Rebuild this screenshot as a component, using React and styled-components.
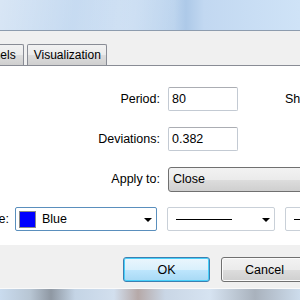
import React from 'react';
import styled, { createGlobalStyle } from 'styled-components';

const GlobalStyle = createGlobalStyle`
  html, body {
    margin: 0;
    padding: 0;
    overflow: hidden;
    background: #f0f0f0;
  }
  body {
    font-family: "Liberation Sans", Arial, sans-serif;
    font-size: 12px;
    color: #000;
  }
`;

const App = () => {
  return (
    <Window>
      <GlobalStyle />
      <Glass />
      <Client>
        <TabStrip>
          <Tab $first>Channels</Tab>
          <Tab>Visualization</Tab>
        </TabStrip>
        <Panel>
          <Row>
            <Label>Period:</Label>
            <TextBox>80</TextBox>
            <SideLabel>Shift:</SideLabel>
          </Row>
          <Row>
            <Label>Deviations:</Label>
            <TextBox>0.382</TextBox>
          </Row>
          <Row>
            <Label>Apply to:</Label>
            <ButtonCombo>Close</ButtonCombo>
          </Row>
          <Row>
            <CutLabel>
              <span>Style:</span>
            </CutLabel>
            <Combo $width={142} $focused>
              <Swatch />
              <ComboText>Blue</ComboText>
              <Arrow />
            </Combo>
            <Combo $width={108}>
              <LineSample />
              <Arrow />
            </Combo>
            <Combo $width={108}>
              <LineSample />
              <Arrow />
            </Combo>
          </Row>
        </Panel>
        <ButtonBar>
          <Button $default>OK</Button>
          <Button>Cancel</Button>
        </ButtonBar>
        <Desktop />
      </Client>
    </Window>
  );
};

const Window = styled.div`
  width: 300px;
  height: 300px;
  overflow: hidden;
  display: flex;
  flex-direction: column;
`;

// window title glass, only a strip of it shows
const Glass = styled.div`
  height: 30px;
  flex-shrink: 0;
  border-bottom: 1px solid #8d9cae;
  background:
    linear-gradient(100deg, rgba(255,255,255,0.35) 0%, rgba(255,255,255,0) 25%, rgba(255,255,255,0.15) 45%, rgba(255,255,255,0) 60%),
    linear-gradient(90deg, #c4d9f0 0%, #c8dcf2 40%, #bcd4ee 58%, #adc9e8 62%, #c2d8f1 68%, #cfe3f7 100%);
`;

const Client = styled.div`
  flex: 1;
  display: flex;
  flex-direction: column;
  background: #f0f0f0;
  padding-top: 12px;
`;

const TabStrip = styled.div`
  display: flex;
  align-items: flex-end;
  gap: 2px;
  height: 22px;
  margin-left: -43px;
`;

const Tab = styled.div`
  height: 21px;
  box-sizing: border-box;
  display: flex;
  align-items: center;
  border: 1px solid #898c95;
  border-bottom: none;
  border-radius: 2px 2px 0 0;
  background: linear-gradient(#f2f2f2 0%, #ebebeb 50%, #dddddd 51%, #cfcfcf 100%);
  white-space: nowrap;
  margin-left: ${(p) => (p.$first ? '0' : '1px')};
  padding-left: ${(p) => (p.$first ? '7px' : '6px')};
  padding-right: ${(p) => (p.$first ? '7px' : '5px')};
`;

const Panel = styled.div`
  background: #fff;
  border-top: 1px solid #898c95;
  height: 180px;
  box-sizing: border-box;
  padding-top: 21px;
  display: flex;
  flex-direction: column;
  gap: 16px;
  font-size: 12.5px;
`;

const Row = styled.div`
  display: flex;
  align-items: center;
  height: 24px;
  white-space: nowrap;
`;

const Label = styled.div`
  width: 160px;
  text-align: right;
  margin-right: 8px;
  flex-shrink: 0;
`;

// label whose start lies off the left edge
const CutLabel = styled.div`
  width: 9px;
  display: flex;
  justify-content: flex-end;
  margin-right: 6px;
  flex-shrink: 0;
`;

const SideLabel = styled.div`
  margin-left: 47px;
  flex-shrink: 0;
`;

const TextBox = styled.div`
  width: 70px;
  height: 24px;
  box-sizing: border-box;
  flex-shrink: 0;
  border: 1px solid #c3cad3;
  border-top-color: #abadb3;
  border-radius: 2px;
  padding: 0 3px;
  display: flex;
  align-items: center;
`;

const ButtonCombo = styled.div`
  width: 200px;
  height: 25px;
  box-sizing: border-box;
  flex-shrink: 0;
  border: 1px solid #707070;
  border-radius: 3px;
  padding: 0 4px;
  display: flex;
  align-items: center;
  background: linear-gradient(#f2f2f2 0%, #ebebeb 50%, #dddddd 51%, #cfcfcf 100%);
`;

const Combo = styled.div`
  width: ${(p) => p.$width}px;
  height: 24px;
  box-sizing: border-box;
  flex-shrink: 0;
  margin-right: 10px;
  border: 1px solid ${(p) => (p.$focused ? '#5a8fbd' : '#c9d0d8')};
  border-radius: 2px;
  padding: 0 4px 0 3px;
  display: flex;
  align-items: center;
  gap: 6px;
  background: #fff;
`;

const Swatch = styled.div`
  width: 17px;
  height: 17px;
  box-sizing: border-box;
  border: 1px solid #8a8a8a;
  background: #0000ff;
  flex-shrink: 0;
`;

const ComboText = styled.div`
  flex: 1;
`;

const LineSample = styled.div`
  flex: 1;
  height: 1px;
  background: #000;
  margin: 0 24px 0 5px;
`;

const Arrow = styled.div`
  width: 0;
  height: 0;
  border-left: 4px solid transparent;
  border-right: 4px solid transparent;
  border-top: 4px solid #000;
  flex-shrink: 0;
  margin-top: 1px;
`;

const ButtonBar = styled.div`
  height: 43px;
  box-sizing: border-box;
  padding: 12px 0 0 123px;
  display: flex;
  gap: 11px;
  font-size: 12.5px;
`;

const Button = styled.div`
  width: 87px;
  height: 25px;
  box-sizing: border-box;
  flex-shrink: 0;
  border: 1px solid ${(p) => (p.$default ? '#3c7fb1' : '#707070')};
  border-radius: 3px;
  display: flex;
  align-items: center;
  justify-content: center;
  box-shadow: inset 0 0 0 1px ${(p) => (p.$default ? '#48d0fa' : '#fbfbfb')};
  background: ${(p) =>
    p.$default
      ? 'linear-gradient(#eaf6fd 0%, #d9f0fc 50%, #bee6fd 51%, #a7d9f5 100%)'
      : 'linear-gradient(#f2f2f2 0%, #ebebeb 50%, #dddddd 51%, #cfcfcf 100%)'};
`;

// blurred desktop showing below the dialog
const Desktop = styled.div`
  flex: 1;
  border-top: 1px solid #fafafa;
  background: linear-gradient(90deg, #c9dbee 0%, #b8c6d4 10%, #8f98a3 17%, #c4d4e5 25%, #d2dfee 38%, #b6a9a8 46%, #c9d6e5 55%, #d6e3f1 70%, #a9b2bd 85%, #cddcec 100%);
`;

export default App;
